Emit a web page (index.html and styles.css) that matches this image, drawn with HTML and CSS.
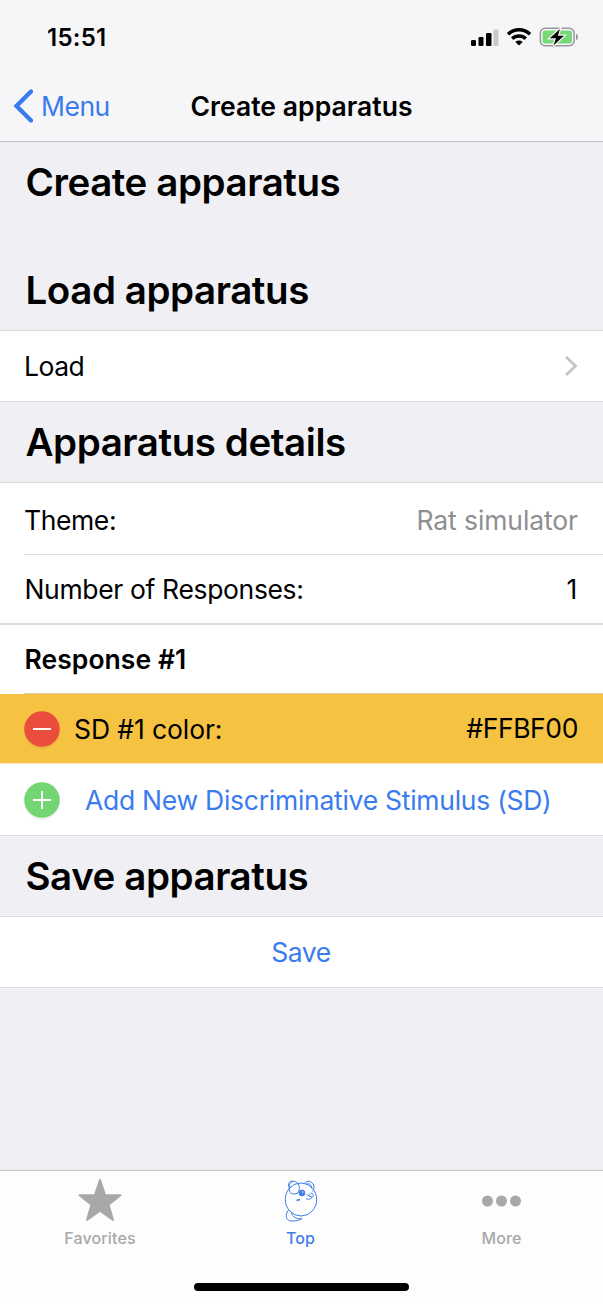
FILE: index.html
```html
<!DOCTYPE html>
<html lang="en">
<head>
<meta charset="utf-8">
<title>Create apparatus</title>
<link rel="stylesheet" href="styles.css">
</head>
<body>
<div class="screen">
  <header class="top">
    <div class="status">
      <span class="clock">15:51</span>
      <svg class="status-icons" width="112" height="24" viewBox="0 0 112 24">
        <rect x="3" y="15" width="5" height="6" rx="1.3"/>
        <rect x="10.500" y="12" width="5" height="9" rx="1.3"/>
        <rect x="18" y="8" width="5.500" height="13" rx="1.300"/>
        <rect x="25.500" y="4.500" width="5" height="16.500" rx="1.300" fill="#c9c9cc"/>
        <g fill="none" stroke="#000" stroke-width="3.600">
          <path d="M40 9.200a16 16 0 0 1 22 0"/>
          <path d="M44.200 13.600a10 10 0 0 1 13.600 0"/>
        </g>
        <path d="M51 20.600l-3.700-3.700a5.400 5.400 0 0 1 7.400 0z"/>
        <rect x="72.300" y="3.200" width="33.800" height="17.600" rx="5" fill="none" stroke="#98989b" stroke-width="1.500"/>
        <rect x="74.500" y="5.400" width="29.500" height="13.200" rx="3" fill="#77d977"/>
        <path d="M108 8.800c2.700 1 2.700 5.400 0 6.400z" fill="#98989b"/>
        <path d="M92 4L81.800 13.200H88L85.500 20.500L96 10.800H89.800Z" stroke="#f6f6f8" stroke-width="2.400" paint-order="stroke"/>
      </svg>
    </div>
    <nav class="nav">
      <a class="back"><svg width="22" height="36" viewBox="0 0 22 36"><path d="M20 3.500L5.500 18L20 32.500" fill="none" stroke="#3a7bf0" stroke-width="4.400" stroke-linecap="round"/></svg><span class="back-label">Menu</span></a>
      <h1 class="title">Create apparatus</h1>
    </nav>
  </header>
  <main class="content">
    <h2 class="head head-page">Create apparatus</h2>
    <h2 class="head head-load">Load apparatus</h2>
    <section class="group">
      <div class="row row-load"><span>Load</span><svg class="chevron" width="14" height="22" viewBox="0 0 14 22"><path d="M2 2L11.500 11L2 20" fill="none" stroke="#c4c4c8" stroke-width="2.800"/></svg></div>
    </section>
    <h2 class="head">Apparatus details</h2>
    <section class="group">
      <div class="row row-theme"><span>Theme:</span><span class="muted">Rat simulator</span></div>
      <div class="row row-number"><span>Number of Responses:</span><span class="count">1</span></div>
      <div class="row row-response"><strong class="response">Response #1</strong></div>
      <div class="row row-color">
        <svg class="dot" width="36" height="39" viewBox="0 0 36 39"><circle cx="18" cy="20.500" r="17.800" fill="#000" opacity=".05"/><circle cx="18" cy="18" r="17.800" fill="#eb4d3d"/><path d="M9 18H27" stroke="#fff" stroke-width="1.900"/></svg>
        <span class="sd">SD #1 color:</span><span class="hex">#FFBF00</span>
      </div>
      <div class="row row-add">
        <svg class="dot" width="36" height="39" viewBox="0 0 36 39"><circle cx="18" cy="20.500" r="17.800" fill="#000" opacity=".05"/><circle cx="18" cy="18" r="17.800" fill="#74d672"/><path d="M9 18H27M18 9V27" stroke="#fff" stroke-width="1.900"/></svg>
        <a class="link add">Add New Discriminative Stimulus (SD)</a>
      </div>
    </section>
    <h2 class="head">Save apparatus</h2>
    <section class="group">
      <div class="row row-save"><a class="link">Save</a></div>
    </section>
  </main>
  <footer class="tabs">
    <div class="tab">
      <svg class="tab-icon" width="46" height="46" viewBox="0 0 46 46"><path d="M23 3L28.200 18.200H43.500L31.500 27.600L36 43L23 33.800L10 43L14.500 27.600L2.500 18.200H17.800Z" fill="#a8a8a8" stroke="#a8a8a8" stroke-width="2" stroke-linejoin="round"/></svg>
      <span class="tab-label">Favorites</span>
    </div>
    <div class="tab tab-active">
      <svg class="tab-icon" width="46" height="46" viewBox="0 0 46 46" fill="none" stroke="#3f7fe6" stroke-width="1">
        <ellipse cx="23" cy="22.500" rx="15.700" ry="16.500"/>
        <path d="M11.500 11C8.500 7 12 3 16 4.500M11.500 10C10 16 14 18.500 20 16C22 12 22 7 18 5C14 3 11.500 6 11.500 10Z"/>
        <path d="M26.500 6.500C29 2.500 36 4.500 36 10C36 12 35.500 13.500 34.500 14.500M28 7.500C31 5.500 34 8 33.500 11.500"/>
        <circle cx="24" cy="16" r="2.900" fill="#3f7fe6"/><circle cx="24.700" cy="15" r=".7" fill="#fff" stroke="none"/>
        <path d="M18.500 23.500L22 22.500" stroke-width="1.800"/>
        <path d="M29 17.500C30 20 33 18 31 16.500M32.500 16C35.500 16 36.500 19 34 20.500C33 22 29.500 23 28 21.500M31 19L34 20"/>
        <path d="M10.500 33C6.500 38 7.500 44.500 15 44C19 44 22 43 24 41.500C19 42.500 14 40 13.500 35.500"/>
      </svg>
      <span class="tab-label">Top</span>
    </div>
    <div class="tab">
      <svg class="tab-icon" width="46" height="46" viewBox="0 0 46 46" fill="#a8a8a8"><circle cx="8.500" cy="24" r="5.500"/><circle cx="22.500" cy="24" r="5.500"/><circle cx="36.500" cy="24" r="5.500"/></svg>
      <span class="tab-label">More</span>
    </div>
    <div class="home"></div>
  </footer>
</div>
</body>
</html>
```
FILE: styles.css
```css
* { box-sizing: border-box; }
body { margin: 0; font-family: Inter, "Liberation Sans", sans-serif; color: #000; }
.screen { width: 603px; height: 1304px; display: flex; flex-direction: column; background: #efeff4; overflow: hidden; white-space: nowrap; }
.top { height: 142px; background: #f6f6f8; border-bottom: 1px solid #bfbfc4; }
.status { height: 72px; padding: 1px 23px 0 47px; display: flex; justify-content: space-between; align-items: center; }
.clock { font-size: 24px; font-weight: 600; letter-spacing: 0.25px; padding-top: 2px; }
.nav { height: 69px; padding-bottom: 2px; display: grid; grid-template-columns: 151px 301px 151px; align-items: center; }
.back { display: flex; align-items: center; padding-left: 11px; color: #3a7bf0; font-size: 26.500px; gap: 8px; }
.back-label { letter-spacing: -0.5px; }
.title { margin: 0; text-align: center; font-size: 26.500px; font-weight: 600; letter-spacing: 0.050px; }
.content { flex: 1; }
.head { margin: 0; height: 80px; padding-left: 25.500px; display: flex; align-items: center; font-size: 38.500px; font-weight: 600; letter-spacing: -0.430px; }
.head-page { padding-bottom: 1px; }
.head-load { height: 108px; padding-top: 27px; }
.group { background: #fff; border-top: 1px solid #dcdce0; border-bottom: 1px solid #dcdce0; font-size: 26.500px; letter-spacing: -0.400px; }
.row { display: flex; align-items: center; justify-content: space-between; padding: 0 25px 0 24px; height: 70px; }
.row-load { letter-spacing: -0.500px; }
.row-theme { height: 72px; padding: 3px 25px 0 0; margin-left: 24px; border-bottom: 1px solid #dcdce0; }
.row-number { padding-left: 24.500px; border-bottom: 2px solid #dcdce0; letter-spacing: -0.350px; }
.count { padding-right: 1px; }
.row-response { height: 69px; margin-left: 24px; padding: 0 0 1px 0.500px; border-bottom: 1px solid #d9cda9; }
.response { font-weight: 600; letter-spacing: 0.050px; }
.row-color { background: #f5c242; justify-content: flex-start; height: 69px; }
.row-add { height: 72px; justify-content: flex-start; border-top: 1px solid #fbe8b9; }
.row-save { justify-content: center; }
.dot { margin: 3px 14px 0 0; flex: none; }
.row-add .dot { margin-right: 25px; }
.sd { letter-spacing: -0.100px; }
.add { letter-spacing: -0.270px; }
.hex { margin-left: auto; padding-bottom: 2px; }
.muted { color: #8e8e93; letter-spacing: -0.100px; }
.link { color: #3a7bf0; }
.tabs { height: 134px; background: #fdfdfd; border-top: 1px solid #c3c3c8; display: grid; grid-template-columns: 200px 201px 201px 1px; grid-template-rows: 88px auto; }
.tab { display: flex; flex-direction: column; align-items: center; padding-top: 6px; color: #a8a8a8; font-size: 16px; font-weight: 500; letter-spacing: 0.150px; }
.tab-label { margin-top: 5px; line-height: 20px; }
.tab-active { color: #3f7fe6; }
.home { grid-column: 1 / 5; justify-self: center; width: 215px; height: 8px; margin-top: 24px; border-radius: 4px; background: #000; }
```
